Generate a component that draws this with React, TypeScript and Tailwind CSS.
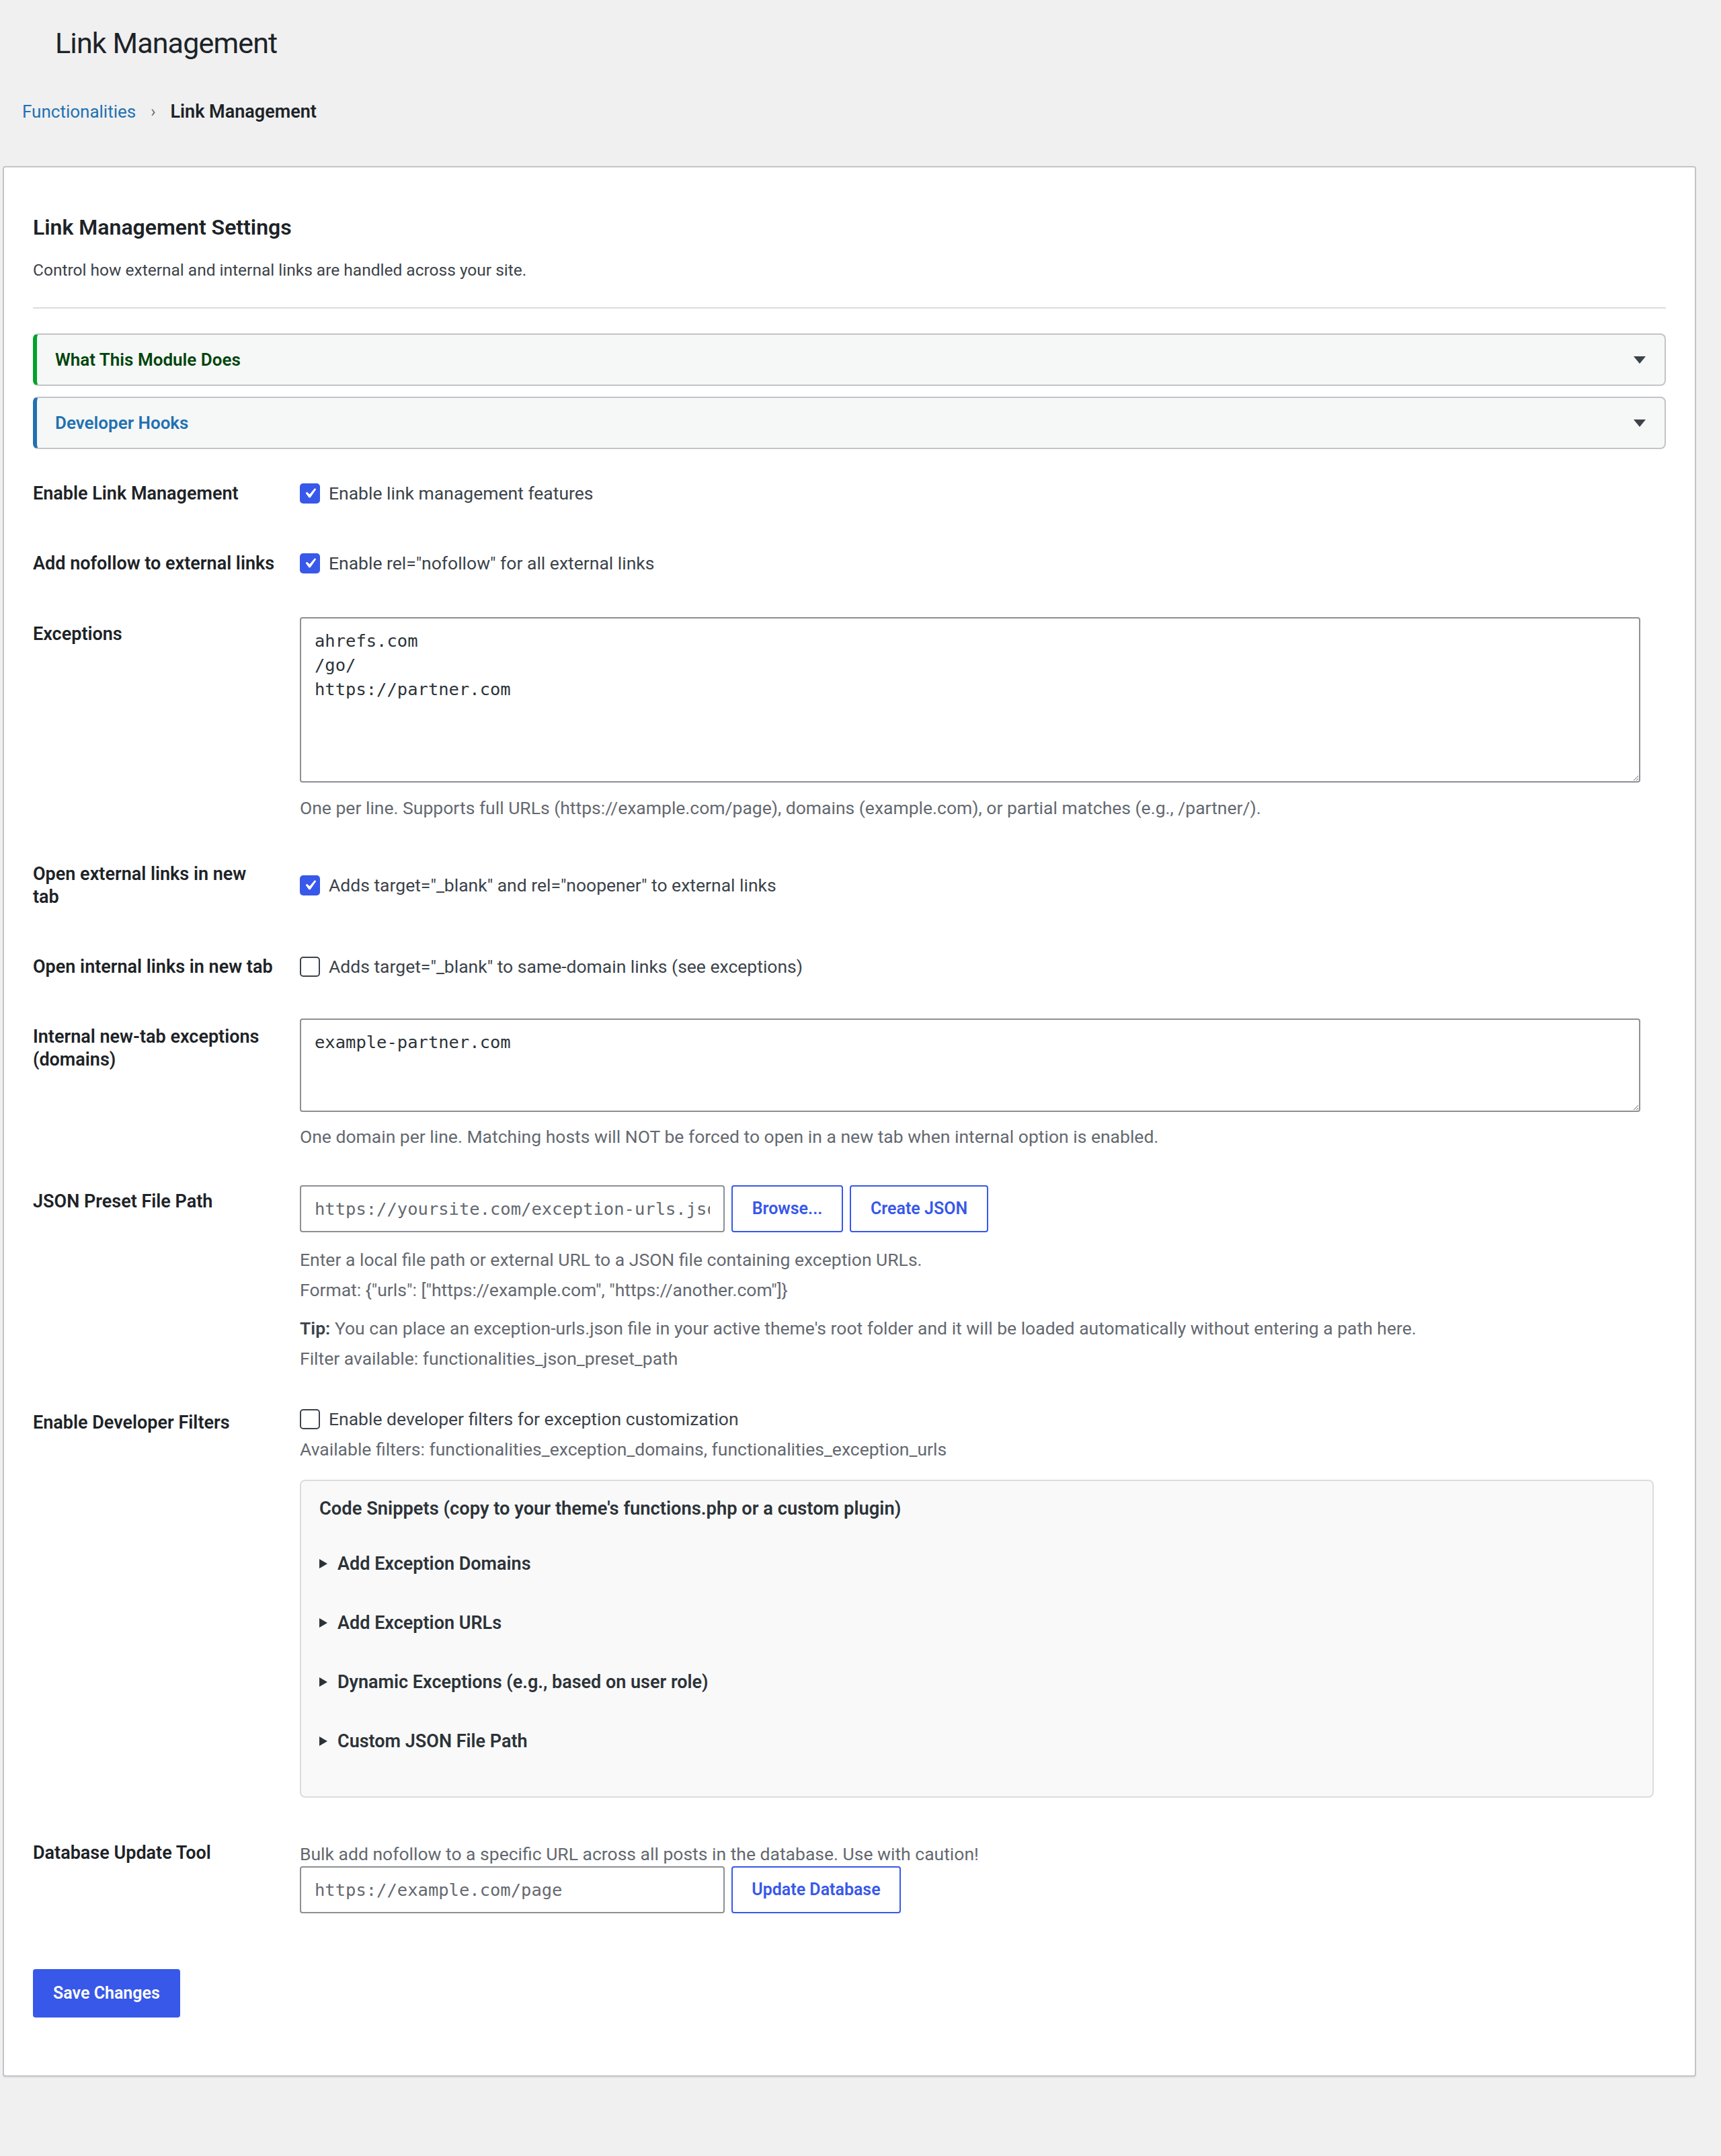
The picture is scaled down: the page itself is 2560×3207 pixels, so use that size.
import type { ReactNode } from "react";

const sans = "[font-family:Roboto,'Noto_Sans',sans-serif]";
const mono = "[font-family:'DejaVu_Sans_Mono',monospace]";

function CheckMark() {
  return (
    <svg viewBox="0 0 20 20" className="h-[30px] w-[30px]">
      <path
        d="M14.83 4.89l1.34.94-5.81 8.38H9.02L5.78 9.67l1.34-1.25 2.57 2.4z"
        fill="#ffffff"
      />
    </svg>
  );
}

function Checkbox({ checked, label }: { checked?: boolean; label: string }) {
  return (
    <label className="flex h-[36px] items-center gap-[13px] text-[26.5px] leading-[36px] text-[#3c434a]">
      {checked ? (
        <span className="flex h-[30px] w-[30px] shrink-0 items-center justify-center rounded-[5px] bg-[#3858e9]">
          <CheckMark />
        </span>
      ) : (
        <span className="h-[30px] w-[30px] shrink-0 rounded-[5px] border-2 border-[#3c434a] bg-white" />
      )}
      <span>{label}</span>
    </label>
  );
}

function Accordion({ title, tone }: { title: string; tone: "green" | "blue" }) {
  const edge =
    tone === "green"
      ? "border-l-[#00a32a] text-[#00450c]"
      : "border-l-[#2271b1] text-[#2271b1]";
  return (
    <div
      className={`flex h-[78px] items-center justify-between rounded-[8px] border-2 border-l-[6px] border-[#c3c4c7] bg-[#f6f7f7] pl-[27px] pr-[28px] ${edge}`}
    >
      <span className="text-[26px] font-semibold">{title}</span>
      <svg viewBox="0 0 18 11" className="h-[11px] w-[18px]">
        <polygon points="0,0 18,0 9,11" fill="#3c434a" />
      </svg>
    </div>
  );
}

function Row({
  label,
  labelClass = "",
  className = "",
  children,
}: {
  label: ReactNode;
  labelClass?: string;
  className?: string;
  children: ReactNode;
}) {
  return (
    <div className={`flex ${className}`}>
      <div
        className={`w-[397px] shrink-0 text-[27px] font-semibold text-[#1d2327] ${labelClass}`}
      >
        {label}
      </div>
      <div className="min-w-0 flex-1">{children}</div>
    </div>
  );
}

function Help({ children, className = "" }: { children: ReactNode; className?: string }) {
  return (
    <p className={`text-[26.5px] leading-[36px] text-[#646970] ${className}`}>{children}</p>
  );
}

function OutlineButton({ children, width }: { children: ReactNode; width: string }) {
  return (
    <button
      className={`h-[70px] ${width} shrink-0 rounded-[4px] border-2 border-[#3858e9] bg-white text-[25px] font-semibold text-[#3858e9]`}
    >
      {children}
    </button>
  );
}

const snippets = [
  "Add Exception Domains",
  "Add Exception URLs",
  "Dynamic Exceptions (e.g., based on user role)",
  "Custom JSON File Path",
];

export default function App() {
  return (
    <div className={`min-h-screen bg-[#f0f0f1] pb-[119px] ${sans}`}>
      <h1 className="pl-[82px] pt-[34px] text-[43px] font-normal leading-[60px] tracking-[-0.02em] text-[#1d2327]">
        Link Management
      </h1>

      <nav className="mt-[54px] flex items-center pl-[33px] text-[26px] leading-[36px]">
        <a className="text-[#2271b1]">Functionalities</a>
        <span className="mx-[22px] text-[24px] text-[#646970]">›</span>
        <span className="text-[27px] font-semibold text-[#1d2327]">Link Management</span>
      </nav>

      <div className="ml-[4px] mt-[63px] w-[2519px] rounded-[4px] border-2 border-[#c3c4c7] bg-white px-[43px] pb-[86px] pt-[69px] shadow-[0_2px_2px_rgba(0,0,0,0.06)]">
        <h2 className="text-[32px] font-semibold leading-[40px] text-[#1d2327]">
          Link Management Settings
        </h2>
        <p className="mt-[26px] text-[24.5px] leading-[36px] text-[#3c434a]">
          Control how external and internal links are handled across your site.
        </p>
        <div className="mt-[37px] h-[2px] bg-[#dcdcde]" />

        <div className="mt-[37px] flex flex-col gap-[16px]">
          <Accordion title="What This Module Does" tone="green" />
          <Accordion title="Developer Hooks" tone="blue" />
        </div>

        <Row label="Enable Link Management" labelClass="leading-[36px]" className="mt-[48px]">
          <Checkbox checked label="Enable link management features" />
        </Row>

        <Row
          label="Add nofollow to external links"
          labelClass="leading-[36px] whitespace-nowrap"
          className="mt-[68px]"
        >
          <Checkbox checked label={'Enable rel="nofollow" for all external links'} />
        </Row>

        <Row label="Exceptions" labelClass="pt-[7px] leading-[36px]" className="mt-[62px]">
          <textarea
            readOnly
            defaultValue={"ahrefs.com\n/go/\nhttps://partner.com"}
            className={`block h-[246px] w-[1994px] rounded-[4px] border-2 border-[#8c8f94] px-[20px] py-[15px] text-[25.5px] leading-[36px] text-[#2c3338] outline-none ${mono}`}
          />
          <Help className="mt-[20px]">
            One per line. Supports full URLs (https://example.com/page), domains (example.com),
            or partial matches (e.g., /partner/).
          </Help>
        </Row>

        <Row
          label={
            <>
              Open external links in new
              <br />
              tab
            </>
          }
          labelClass="leading-[34px]"
          className="mt-[63px]"
        >
          <div className="pt-[16px]">
            <Checkbox
              checked
              label={'Adds target="_blank" and rel="noopener" to external links'}
            />
          </div>
        </Row>

        <Row
          label="Open internal links in new tab"
          labelClass="leading-[36px] whitespace-nowrap"
          className="mt-[69px]"
        >
          <Checkbox label={'Adds target="_blank" to same-domain links (see exceptions)'} />
        </Row>

        <Row
          label={
            <>
              Internal new-tab exceptions
              <br />
              (domains)
            </>
          }
          labelClass="pt-[10px] leading-[34px]"
          className="mt-[59px]"
        >
          <textarea
            readOnly
            defaultValue="example-partner.com"
            className={`block h-[139px] w-[1994px] rounded-[4px] border-2 border-[#8c8f94] px-[20px] py-[15px] text-[25.5px] leading-[36px] text-[#2c3338] outline-none ${mono}`}
          />
          <Help className="mt-[19px]">
            One domain per line. Matching hosts will NOT be forced to open in a new tab when
            internal option is enabled.
          </Help>
        </Row>

        <Row label="JSON Preset File Path" labelClass="pt-[6px] leading-[36px]" className="mt-[54px]">
          <div className="flex gap-[10px]">
            <input
              readOnly
              placeholder="https://yoursite.com/exception-urls.json"
              className={`h-[70px] w-[632px] rounded-[4px] border-2 border-[#8c8f94] px-[20px] text-[25.5px] text-[#2c3338] outline-none placeholder:text-[#646970] ${mono}`}
            />
            <OutlineButton width="w-[166px]">Browse...</OutlineButton>
            <OutlineButton width="w-[206px]">Create JSON</OutlineButton>
          </div>
          <div className="mt-[18px] text-[26.5px] leading-[45px] text-[#646970]">
            <p>Enter a local file path or external URL to a JSON file containing exception URLs.</p>
            <p>Format: {'{"urls": ["https://example.com", "https://another.com"]}'}</p>
          </div>
          <div className="mt-[12px] text-[26.5px] leading-[45px] text-[#646970]">
            <p>
              <strong className="font-semibold text-[#3c434a]">Tip:</strong> You can place an
              exception-urls.json file in your active theme's root folder and it will be loaded
              automatically without entering a path here.
            </p>
            <p>Filter available: functionalities_json_preset_path</p>
          </div>
        </Row>

        <Row label="Enable Developer Filters" labelClass="pt-[7px] leading-[36px]" className="mt-[48px]">
          <div className="pt-[2px]">
            <Checkbox label="Enable developer filters for exception customization" />
          </div>
          <Help className="mt-[9px]">
            Available filters: functionalities_exception_domains, functionalities_exception_urls
          </Help>
          <div className="mt-[27px] h-[473px] w-[2014px] rounded-[8px] border-2 border-[#dcdcde] bg-[#f9f9f9] px-[27px] pt-[23px]">
            <p className="text-[27.3px] font-semibold leading-[36px] text-[#2c3338]">
              Code Snippets (copy to your theme's functions.php or a custom plugin)
            </p>
            <ul className="mt-[46px] flex flex-col gap-[52px]">
              {snippets.map((s) => (
                <li
                  key={s}
                  className="flex items-center gap-[15px] text-[27px] font-semibold leading-[36px] text-[#2c3338]"
                >
                  <svg viewBox="0 0 12 14" className="h-[14px] w-[12px]">
                    <polygon points="0,0 12,7 0,14" fill="#2c3338" />
                  </svg>
                  {s}
                </li>
              ))}
            </ul>
          </div>
        </Row>

        <Row label="Database Update Tool" labelClass="leading-[36px]" className="mt-[64px]">
          <Help className="pt-[2px] text-[#3c434a]">
            Bulk add nofollow to a specific URL across all posts in the database. Use with caution!
          </Help>
          <div className="flex gap-[10px]">
            <input
              readOnly
              placeholder="https://example.com/page"
              className={`h-[70px] w-[632px] rounded-[4px] border-2 border-[#8c8f94] px-[20px] text-[25.5px] text-[#2c3338] outline-none placeholder:text-[#646970] ${mono}`}
            />
            <OutlineButton width="w-[252px]">Update Database</OutlineButton>
          </div>
        </Row>

        <button className="mt-[83px] h-[72px] w-[219px] rounded-[4px] bg-[#3858e9] text-[25px] font-semibold text-white">
          Save Changes
        </button>
      </div>
    </div>
  );
}
